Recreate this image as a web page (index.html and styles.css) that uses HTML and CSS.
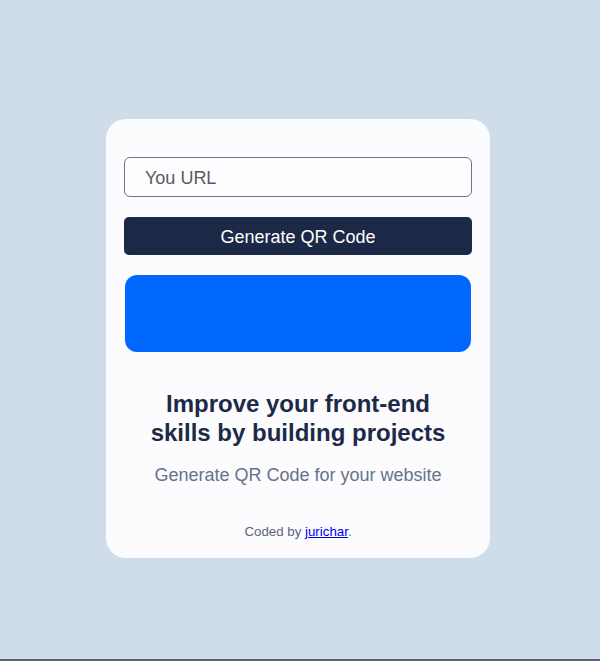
FILE: index.html
```html
<!DOCTYPE html>
<html lang="en">
<head>
<meta charset="utf-8">
<title>QR Code Generator</title>
<link rel="stylesheet" href="styles.css">
</head>
<body>
<main class="page">
  <section class="card">
    <input class="url-input" type="text" placeholder="You URL">
    <button class="generate-btn" type="button">Generate QR Code</button>
    <div class="qr-box"></div>
    <h1 class="title">Improve your front-end skills by building projects</h1>
    <p class="subtitle">Generate QR Code for your website</p>
    <p class="credit">Coded by <a href="#">jurichar</a>.</p>
  </section>
</main>
</body>
</html>
```

FILE: styles.css
```css
* { box-sizing: border-box; }
html, body { margin: 0; padding: 0; }
body {
  background: #cfdcea;
  font-family: "Liberation Sans", Arial, sans-serif;
  min-height: 100vh;
  border-bottom: 2px solid #5b6372;
}
.page {
  display: flex;
  justify-content: center;
  padding-top: 119px;
  padding-right: 4px;
}
.card {
  width: 384px;
  height: 439px;
  background: #fcfbfe;
  border-radius: 20px;
  padding: 38px 18px 0;
  display: flex;
  flex-direction: column;
  align-items: center;
}
.url-input {
  width: 348px;
  height: 40px;
  border: 1px solid #6e7585;
  border-radius: 6px;
  background: #fdfcfe;
  padding: 3px 20px 0;
  font-family: inherit;
  font-size: 18px;
  color: #333;
  outline: none;
}
.url-input::placeholder { color: #5b5b5f; }
.generate-btn {
  margin-top: 20px;
  width: 348px;
  height: 38px;
  border: none;
  border-radius: 5px;
  background: #1b2846;
  color: #ffffff;
  font-family: inherit;
  font-size: 18px;
  padding: 2px 0 0;
  cursor: pointer;
}
.qr-box {
  margin-top: 20px;
  width: 346px;
  height: 77px;
  background: #0068ff;
  border-radius: 12px;
}
.title {
  margin: 37px 0 0;
  width: 310px;
  text-align: center;
  font-size: 24px;
  line-height: 29px;
  font-weight: 700;
  color: #1c2a48;
}
.subtitle {
  margin: 17px 0 0;
  font-size: 18px;
  line-height: 22px;
  color: #66738a;
}
.credit {
  margin: 37px 0 0;
  font-size: 13.3px;
  line-height: 18px;
  color: #5a6579;
}
.credit a { color: #0000ee; text-decoration: underline; }
```
